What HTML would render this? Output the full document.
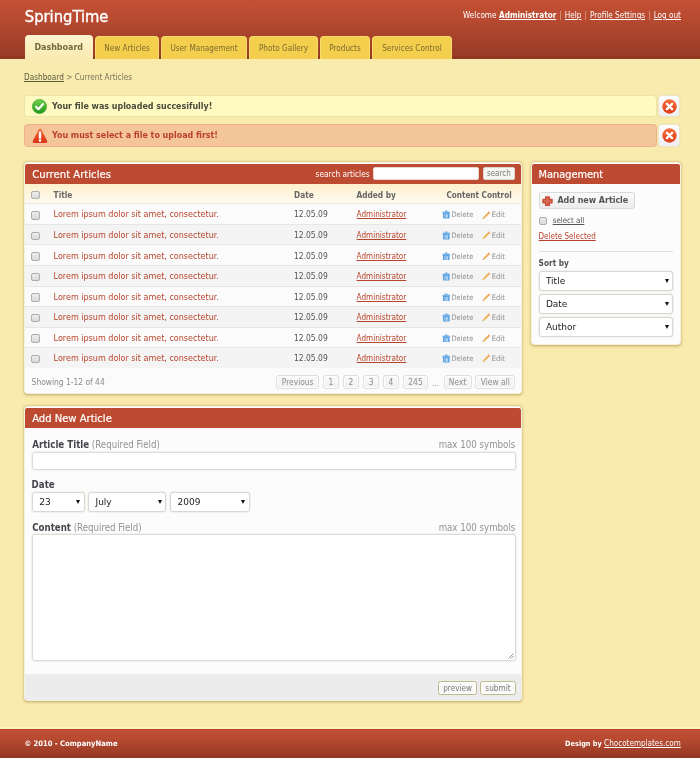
<!DOCTYPE html>
<html lang="en">
<head>
<meta charset="utf-8">
<title>SpringTime</title>
<style>
*{box-sizing:border-box;margin:0;padding:0}
html,body{width:700px;height:758px;overflow:hidden}
body{background:#f9eaae;font-family:"DejaVu Sans Condensed","DejaVu Sans","Liberation Sans",sans-serif;font-size:8.2px;color:#555;position:relative;line-height:1;will-change:transform}
a{color:inherit}
.abs{position:absolute;white-space:nowrap}
#header{position:absolute;left:0;top:0;width:700px;height:59px;background:linear-gradient(#c35034 0,#b94b31 30%,#a9432c 60%,#993b26 94%,#8d351f 97%,#93381f 100%)}
#logo{left:24.8px;top:5.6px;font-size:16.4px;color:#fff;line-height:22px;-webkit-text-stroke:.35px #fff}
#topnav{right:19px;top:9px;font-size:8.15px;color:#fff;font-weight:bold;line-height:12px}
#topnav a{color:#fff}
#topnav .n{font-weight:normal}
#topnav .sep{font-weight:normal;color:#e4ad9b;padding:0 .5px}
.tab{position:absolute;top:35.5px;height:23.5px;background:#f4cf4e;border:1px solid #f8dc6e;border-bottom:none;border-radius:4px 4px 0 0;color:#7b6b2e;font-size:8.15px;line-height:22px;text-align:center;white-space:nowrap}
.tab.act{top:35px;height:24.5px;background:linear-gradient(#fef4cf,#f9eaae);border:none;color:#6f6b3c;font-weight:bold;font-size:8.85px;line-height:24px}
#crumb{left:24px;top:71px;font-size:8.18px;line-height:12px;color:#77775c}
#crumb a{color:#5b5b40}
.msg{position:absolute;left:24px;width:632.6px;height:22.4px;border-radius:3.5px;font-weight:bold;font-size:8.85px;line-height:20.4px;padding-left:27px;white-space:nowrap}
.msg.ok{top:95px;background:#fefac2;border:1px solid #ebe4a4;color:#4a4a3a}
.msg.err{top:124.2px;background:#f5c59a;border:1px solid #ecb285;color:#b9412c}
.close{position:absolute;left:658.3px;width:22.2px;height:22.3px;border-radius:3.5px;background:linear-gradient(#fdfdfd,#efeff3);border:1px solid #ece6c8;box-shadow:0 0 1px rgba(160,140,60,.4)}
.box{position:absolute;background:#fcfcfc;border:1px solid #f6f1dc;border-radius:3.5px;box-shadow:0 .5px 3px rgba(140,110,30,.55);overflow:hidden}
.box h2{position:absolute;left:0;top:1px;right:0;height:20px;background:#bc4b31;color:#fff;font-family:"DejaVu Sans","Liberation Sans",sans-serif;font-weight:normal;font-size:10px;line-height:22px;padding-left:7.2px;-webkit-text-stroke:.2px #fff;border-radius:2px 2px 0 0}
.th{position:absolute;left:0;right:0;top:21px;height:20.4px;background:linear-gradient(#fdf0cb,#fefaf0);border-bottom:1px solid #e8e6e0;font-weight:bold;color:#666}
.th span,.tr span,.tr a{position:absolute;white-space:nowrap}
.th span{top:1.7px;line-height:19px;font-size:8.25px}
.tr{position:absolute;left:0;right:0;height:20.55px;border-bottom:1px solid #e6e6e6;line-height:19.55px}
.tr.o{background:#fbfbfb}.tr.e{background:#f4f4f4}
.tr span,.tr a{top:1.1px}
.tr .t{left:28.6px;color:#b8442b;font-size:8.95px}
.tr .d{left:269px;font-size:8.44px;color:#555}
.tr .u{left:331.6px;font-size:8.12px;color:#b8442b}
.tr .del{left:426.5px;font-size:7.4px;color:#8e8e8e}
.tr .ed{left:466.8px;font-size:7.5px;color:#8e8e8e}
.cb{position:absolute;width:8.6px;height:8.6px;border:1px solid #adadad;border-radius:2px;background:linear-gradient(#ededed,#d9d9d9)}
.pg{position:absolute;top:212px;height:14px;border:1px solid #dedede;border-radius:3px;background:linear-gradient(#f8f8f8,#f1f1f1);color:#8c8c8c;font-size:8.37px;line-height:12px;text-align:center;box-shadow:0 0 0 1px #fff inset}
.btn{position:absolute;border:1px solid #d9d9d9;border-radius:2.5px;background:linear-gradient(#fafafa,#ececec);color:#555}
.sel{position:absolute;background:#fff;border:1px solid #d8d8d8;border-radius:3px;color:#222;font-family:"DejaVu Sans","Liberation Sans",sans-serif;font-size:9px;white-space:nowrap;height:19.5px;line-height:19.4px;padding-left:6.3px;box-shadow:0 0 0 1px #f4f1e8}
.sel i{position:absolute;right:3.2px;top:50%;margin-top:-1.7px;width:0;height:0;border-left:2.4px solid transparent;border-right:2.4px solid transparent;border-top:4.2px solid #111}
.lbl{position:absolute;white-space:nowrap;font-size:9.65px;color:#939393;line-height:12px}
.lbl b{color:#46464c}
.inp{position:absolute;background:#fff;border:1px solid #dcdcdc;border-radius:3px;box-shadow:0 0 0 1px #f4f1e8}
.sb{position:absolute;top:274.2px;height:14px;border:1px solid #bdb78c;border-radius:2.5px;background:#f9f9f7;color:#7a7a7a;line-height:12px;text-align:center;box-shadow:0 0 0 1px #fff inset}
#footer{left:0;top:729px;width:700px;height:29px;background:linear-gradient(#b83c24 0,#c24f33 5%,#b94b31 30%,#a9432c 60%,#993b26 90%,#8e3520 94%,#983a25 100%);color:#fff;font-size:8.2px;box-shadow:0 -2px 0 #fcf4bc}
#footer a{color:#fff}
#footer span{top:8.8px;line-height:12px}
</style>
</head>
<body>
<svg width="0" height="0" style="position:absolute"><defs>
<linearGradient id="cg" x1="0" y1="0" x2="0" y2="1"><stop offset="0" stop-color="#f4703f"/><stop offset="1" stop-color="#df3a18"/></linearGradient>
<linearGradient id="gg" x1="0" y1="0" x2="0" y2="1"><stop offset="0" stop-color="#6fd24c"/><stop offset="1" stop-color="#23951b"/></linearGradient>
<linearGradient id="rg" x1="0" y1="0" x2="0" y2="1"><stop offset="0" stop-color="#f86a3a"/><stop offset="1" stop-color="#d9381a"/></linearGradient>
</defs></svg>
<div id="header"></div>
<div id="logo" class="abs">SpringTime</div>
<div id="topnav" class="abs"><span class="n">Welcome</span> <a href="#">Administrator</a> <span class="sep">|</span> <a href="#" class="n">Help</a> <span class="sep">|</span> <a href="#" class="n">Profile Settings</a> <span class="sep">|</span> <a href="#" class="n">Log out</a></div>

<div class="tab act" style="left:24.5px;width:68.5px">Dashboard</div>
<div class="tab" style="left:95px;width:64px">New Articles</div>
<div class="tab" style="left:161px;width:86px">User Management</div>
<div class="tab" style="left:249px;width:69px">Photo Gallery</div>
<div class="tab" style="left:320px;width:50px">Products</div>
<div class="tab" style="left:372px;width:80px">Services Control</div>

<div id="crumb" class="abs"><a href="#">Dashboard</a> &gt; Current Articles</div>

<div class="msg ok">Your file was uploaded succesifully!</div>
<div class="msg err">You must select a file to upload first!</div>
<svg class="abs" style="left:31.5px;top:99px" width="15" height="15" viewBox="0 0 15 15"><circle cx="7.5" cy="7.5" r="7.100" fill="url(#gg)" stroke="#2f9a25" stroke-width=".6"/><path d="M4 7.700l2.400 2.500 4.600-5.200" fill="none" stroke="#fff" stroke-width="2.1" stroke-linecap="round" stroke-linejoin="round"/></svg>
<svg class="abs" style="left:31.5px;top:127.6px" width="16" height="16" viewBox="0 0 16 16"><path d="M8 2.200L13.800 13.400H2.200z" fill="url(#rg)" stroke="url(#rg)" stroke-width="3" stroke-linejoin="round"/><path d="M8 4.600v5.200" stroke="#fff" stroke-width="2.3" stroke-linecap="round"/><circle cx="8" cy="12.600" r="1.300" fill="#fff"/></svg>
<div class="close" style="top:95px"><svg class="abs" style="left:2.8px;top:3px" width="15" height="15" viewBox="0 0 15 15"><circle cx="7.5" cy="7.5" r="7.2" fill="url(#cg)"/><path d="M4.900 4.900l5.200 5.200M10.100 4.900l-5.200 5.200" stroke="#fff" stroke-width="2.3" stroke-linecap="round"/></svg></div>
<div class="close" style="top:124.3px"><svg class="abs" style="left:2.8px;top:3px" width="15" height="15" viewBox="0 0 15 15"><circle cx="7.5" cy="7.5" r="7.2" fill="url(#cg)"/><path d="M4.900 4.900l5.200 5.200M10.100 4.900l-5.200 5.200" stroke="#fff" stroke-width="2.3" stroke-linecap="round"/></svg></div>

<div class="box" id="b1" style="left:24px;top:162px;width:498.4px;height:231.6px"><h2 style="font-size:10.1px">Current Articles</h2>
<span class="abs" style="left:290.6px;top:1px;line-height:21px;color:#fff;font-size:8.23px">search articles</span>
<div class="abs" style="left:348px;top:4.2px;width:106px;height:13px;background:#fff;border:1px solid #e9d6cf;border-radius:2px"></div>
<div class="abs" style="left:457.6px;top:4.2px;width:32.6px;height:13px;background:#f5f5f3;border:1px solid #e0d4cc;border-radius:2px;color:#7a7a7a;font-size:8px;line-height:12.6px;text-align:center">search</div>
<div class="th"><i class="cb" style="left:6.4px;top:6.5px"></i><span style="left:28.6px">Title</span><span style="left:269px">Date</span><span style="left:331.4px">Added by</span><span style="left:421.4px;font-size:8.1px">Content Control</span></div>
<div class="tr o" style="top:41.40px"><i class="cb" style="left:6.4px;top:6.6px"></i><span class="t">Lorem ipsum dolor sit amet, consectetur.</span><span class="d">12.05.09</span><a class="u" href="#">Administrator</a><svg class="abs" style="left:416.6px;top:6px" width="8.6" height="8.6" viewBox="0 0 9 9"><path d="M1 3.200h7v5q0 .6-.6.6H1.600q-.6 0-.6-.6z" fill="#5a9fe0"/><path d="M.2 3.300q0-1.600 1.700-1.600h5.200q1.700 0 1.700 1.600z" fill="#76b3e8"/><path d="M3 1.900q0-1.700 1.500-1.700 1.500 0 1.500 1.700z" fill="#68a9e4"/><path d="M3.100 4.300v3.800M4.500 4.300v3.800M5.900 4.300v3.800" stroke="#c4e0f6" stroke-width=".9"/></svg><span class="del">Delete</span><svg class="abs" style="left:456.5px;top:6.2px" width="8.6" height="8.6" viewBox="0 0 9 9"><path d="M7 .6l1.400 1.400-5.600 5.600-2.200.9.800-2.300z" fill="#f1b04e"/><path d="M7 .6l1.400 1.400-.8.800-1.400-1.400z" fill="#ee9a80"/><path d="M.6 8.500l.8-2.300 1.400 1.400z" fill="#f0d6a8"/><path d="M.6 8.500l.3-1 .7.700z" fill="#6a5a4a"/></svg><span class="ed">Edit</span></div>
<div class="tr e" style="top:61.95px"><i class="cb" style="left:6.4px;top:6.6px"></i><span class="t">Lorem ipsum dolor sit amet, consectetur.</span><span class="d">12.05.09</span><a class="u" href="#">Administrator</a><svg class="abs" style="left:416.6px;top:6px" width="8.6" height="8.6" viewBox="0 0 9 9"><path d="M1 3.200h7v5q0 .6-.6.6H1.600q-.6 0-.6-.6z" fill="#5a9fe0"/><path d="M.2 3.300q0-1.600 1.700-1.600h5.200q1.700 0 1.700 1.600z" fill="#76b3e8"/><path d="M3 1.900q0-1.700 1.500-1.700 1.500 0 1.500 1.700z" fill="#68a9e4"/><path d="M3.100 4.300v3.800M4.500 4.300v3.800M5.900 4.300v3.800" stroke="#c4e0f6" stroke-width=".9"/></svg><span class="del">Delete</span><svg class="abs" style="left:456.5px;top:6.2px" width="8.6" height="8.6" viewBox="0 0 9 9"><path d="M7 .6l1.400 1.400-5.600 5.600-2.200.9.800-2.300z" fill="#f1b04e"/><path d="M7 .6l1.400 1.400-.8.800-1.400-1.400z" fill="#ee9a80"/><path d="M.6 8.500l.8-2.300 1.400 1.400z" fill="#f0d6a8"/><path d="M.6 8.500l.3-1 .7.700z" fill="#6a5a4a"/></svg><span class="ed">Edit</span></div>
<div class="tr o" style="top:82.50px"><i class="cb" style="left:6.4px;top:6.6px"></i><span class="t">Lorem ipsum dolor sit amet, consectetur.</span><span class="d">12.05.09</span><a class="u" href="#">Administrator</a><svg class="abs" style="left:416.6px;top:6px" width="8.6" height="8.6" viewBox="0 0 9 9"><path d="M1 3.200h7v5q0 .6-.6.6H1.600q-.6 0-.6-.6z" fill="#5a9fe0"/><path d="M.2 3.300q0-1.600 1.700-1.600h5.200q1.700 0 1.700 1.600z" fill="#76b3e8"/><path d="M3 1.900q0-1.700 1.500-1.700 1.500 0 1.500 1.700z" fill="#68a9e4"/><path d="M3.100 4.300v3.800M4.500 4.300v3.800M5.900 4.300v3.800" stroke="#c4e0f6" stroke-width=".9"/></svg><span class="del">Delete</span><svg class="abs" style="left:456.5px;top:6.2px" width="8.6" height="8.6" viewBox="0 0 9 9"><path d="M7 .6l1.400 1.400-5.600 5.600-2.200.9.800-2.300z" fill="#f1b04e"/><path d="M7 .6l1.400 1.400-.8.800-1.400-1.400z" fill="#ee9a80"/><path d="M.6 8.500l.8-2.300 1.400 1.400z" fill="#f0d6a8"/><path d="M.6 8.500l.3-1 .7.700z" fill="#6a5a4a"/></svg><span class="ed">Edit</span></div>
<div class="tr e" style="top:103.05px"><i class="cb" style="left:6.4px;top:6.6px"></i><span class="t">Lorem ipsum dolor sit amet, consectetur.</span><span class="d">12.05.09</span><a class="u" href="#">Administrator</a><svg class="abs" style="left:416.6px;top:6px" width="8.6" height="8.6" viewBox="0 0 9 9"><path d="M1 3.200h7v5q0 .6-.6.6H1.600q-.6 0-.6-.6z" fill="#5a9fe0"/><path d="M.2 3.300q0-1.600 1.700-1.600h5.200q1.700 0 1.700 1.600z" fill="#76b3e8"/><path d="M3 1.900q0-1.700 1.500-1.700 1.500 0 1.500 1.700z" fill="#68a9e4"/><path d="M3.100 4.300v3.800M4.500 4.300v3.800M5.900 4.300v3.800" stroke="#c4e0f6" stroke-width=".9"/></svg><span class="del">Delete</span><svg class="abs" style="left:456.5px;top:6.2px" width="8.6" height="8.6" viewBox="0 0 9 9"><path d="M7 .6l1.400 1.400-5.600 5.600-2.200.9.800-2.300z" fill="#f1b04e"/><path d="M7 .6l1.400 1.400-.8.800-1.400-1.400z" fill="#ee9a80"/><path d="M.6 8.500l.8-2.300 1.400 1.400z" fill="#f0d6a8"/><path d="M.6 8.500l.3-1 .7.700z" fill="#6a5a4a"/></svg><span class="ed">Edit</span></div>
<div class="tr o" style="top:123.60px"><i class="cb" style="left:6.4px;top:6.6px"></i><span class="t">Lorem ipsum dolor sit amet, consectetur.</span><span class="d">12.05.09</span><a class="u" href="#">Administrator</a><svg class="abs" style="left:416.6px;top:6px" width="8.6" height="8.6" viewBox="0 0 9 9"><path d="M1 3.200h7v5q0 .6-.6.6H1.600q-.6 0-.6-.6z" fill="#5a9fe0"/><path d="M.2 3.300q0-1.600 1.700-1.600h5.200q1.700 0 1.700 1.600z" fill="#76b3e8"/><path d="M3 1.900q0-1.700 1.500-1.700 1.500 0 1.500 1.700z" fill="#68a9e4"/><path d="M3.100 4.300v3.800M4.500 4.300v3.800M5.900 4.300v3.800" stroke="#c4e0f6" stroke-width=".9"/></svg><span class="del">Delete</span><svg class="abs" style="left:456.5px;top:6.2px" width="8.6" height="8.6" viewBox="0 0 9 9"><path d="M7 .6l1.400 1.400-5.600 5.600-2.200.9.800-2.300z" fill="#f1b04e"/><path d="M7 .6l1.400 1.400-.8.800-1.400-1.400z" fill="#ee9a80"/><path d="M.6 8.500l.8-2.300 1.400 1.400z" fill="#f0d6a8"/><path d="M.6 8.500l.3-1 .7.700z" fill="#6a5a4a"/></svg><span class="ed">Edit</span></div>
<div class="tr e" style="top:144.15px"><i class="cb" style="left:6.4px;top:6.6px"></i><span class="t">Lorem ipsum dolor sit amet, consectetur.</span><span class="d">12.05.09</span><a class="u" href="#">Administrator</a><svg class="abs" style="left:416.6px;top:6px" width="8.6" height="8.6" viewBox="0 0 9 9"><path d="M1 3.200h7v5q0 .6-.6.6H1.600q-.6 0-.6-.6z" fill="#5a9fe0"/><path d="M.2 3.300q0-1.600 1.700-1.600h5.200q1.700 0 1.700 1.600z" fill="#76b3e8"/><path d="M3 1.900q0-1.700 1.500-1.700 1.500 0 1.500 1.700z" fill="#68a9e4"/><path d="M3.100 4.300v3.800M4.500 4.300v3.800M5.900 4.300v3.800" stroke="#c4e0f6" stroke-width=".9"/></svg><span class="del">Delete</span><svg class="abs" style="left:456.5px;top:6.2px" width="8.6" height="8.6" viewBox="0 0 9 9"><path d="M7 .6l1.400 1.400-5.600 5.600-2.200.9.800-2.300z" fill="#f1b04e"/><path d="M7 .6l1.400 1.400-.8.800-1.400-1.400z" fill="#ee9a80"/><path d="M.6 8.500l.8-2.300 1.400 1.400z" fill="#f0d6a8"/><path d="M.6 8.500l.3-1 .7.700z" fill="#6a5a4a"/></svg><span class="ed">Edit</span></div>
<div class="tr o" style="top:164.70px"><i class="cb" style="left:6.4px;top:6.6px"></i><span class="t">Lorem ipsum dolor sit amet, consectetur.</span><span class="d">12.05.09</span><a class="u" href="#">Administrator</a><svg class="abs" style="left:416.6px;top:6px" width="8.6" height="8.6" viewBox="0 0 9 9"><path d="M1 3.200h7v5q0 .6-.6.6H1.600q-.6 0-.6-.6z" fill="#5a9fe0"/><path d="M.2 3.300q0-1.600 1.700-1.600h5.200q1.700 0 1.700 1.600z" fill="#76b3e8"/><path d="M3 1.900q0-1.700 1.500-1.700 1.500 0 1.500 1.700z" fill="#68a9e4"/><path d="M3.100 4.300v3.800M4.500 4.300v3.800M5.900 4.300v3.800" stroke="#c4e0f6" stroke-width=".9"/></svg><span class="del">Delete</span><svg class="abs" style="left:456.5px;top:6.2px" width="8.6" height="8.6" viewBox="0 0 9 9"><path d="M7 .6l1.400 1.400-5.600 5.600-2.200.9.800-2.300z" fill="#f1b04e"/><path d="M7 .6l1.400 1.400-.8.800-1.400-1.400z" fill="#ee9a80"/><path d="M.6 8.500l.8-2.300 1.400 1.400z" fill="#f0d6a8"/><path d="M.6 8.500l.3-1 .7.700z" fill="#6a5a4a"/></svg><span class="ed">Edit</span></div>
<div class="tr e" style="top:185.25px"><i class="cb" style="left:6.4px;top:6.6px"></i><span class="t">Lorem ipsum dolor sit amet, consectetur.</span><span class="d">12.05.09</span><a class="u" href="#">Administrator</a><svg class="abs" style="left:416.6px;top:6px" width="8.6" height="8.6" viewBox="0 0 9 9"><path d="M1 3.200h7v5q0 .6-.6.6H1.600q-.6 0-.6-.6z" fill="#5a9fe0"/><path d="M.2 3.300q0-1.600 1.700-1.600h5.200q1.700 0 1.700 1.600z" fill="#76b3e8"/><path d="M3 1.900q0-1.700 1.500-1.700 1.500 0 1.500 1.700z" fill="#68a9e4"/><path d="M3.100 4.300v3.800M4.500 4.300v3.800M5.900 4.300v3.800" stroke="#c4e0f6" stroke-width=".9"/></svg><span class="del">Delete</span><svg class="abs" style="left:456.5px;top:6.2px" width="8.6" height="8.6" viewBox="0 0 9 9"><path d="M7 .6l1.400 1.400-5.600 5.600-2.200.9.800-2.300z" fill="#f1b04e"/><path d="M7 .6l1.400 1.400-.8.800-1.400-1.400z" fill="#ee9a80"/><path d="M.6 8.500l.8-2.300 1.400 1.400z" fill="#f0d6a8"/><path d="M.6 8.500l.3-1 .7.700z" fill="#6a5a4a"/></svg><span class="ed">Edit</span></div>

<div class="abs" style="left:0;right:0;top:205.400px;height:26px;background:#fbfbfb"></div>
<span class="abs" style="left:6.6px;top:207px;line-height:24px;color:#8a8a8a;font-size:8.4px">Showing 1-12 of 44</span>
<div class="pg" style="left:251.3px;width:42.7px">Previous</div><div class="pg" style="left:297.7px;width:16.4px">1</div><div class="pg" style="left:317.8px;width:16.4px">2</div><div class="pg" style="left:337.9px;width:16.3px">3</div><div class="pg" style="left:357.9px;width:16px">4</div><div class="pg" style="left:378px;width:25px">245</div><div class="pg" style="left:418.5px;width:28.2px">Next</div><div class="pg" style="left:450.4px;width:39.8px">View all</div>
<span class="abs" style="left:407px;top:212.5px;line-height:14px;color:#8a8a8a;font-size:8.4px">...</span>
</div>

<div class="box" id="b2" style="left:531.4px;top:162px;width:149.4px;height:182.6px"><h2 style="font-size:9.8px;padding-left:6.2px">Management</h2>
<div class="btn" style="left:6.2px;top:29px;width:96.6px;height:17px"></div>
<svg class="abs" style="left:9.6px;top:32.600px" width="11" height="10.400" viewBox="0 0 11 10.400"><path d="M3.700 1h3.600v2.600h2.700v3.200h-2.700v2.600H3.700v-2.600H1V3.600h2.700z" fill="#db6a52" stroke="#c9503a" stroke-width="1.5" stroke-linejoin="round"/></svg>
<span class="abs" style="left:25px;top:29.3px;line-height:17px;font-weight:bold;font-size:8.83px;color:#555">Add new Article</span>
<i class="cb" style="left:6.6px;top:54px;width:8px;height:8px"></i>
<a class="abs" href="#" style="left:20.3px;top:51.8px;line-height:12px;font-size:7.9px;color:#555">select all</a>
<a class="abs" href="#" style="left:6.2px;top:67.6px;line-height:12px;font-size:8px;color:#b8442b">Delete Selected</a>
<div class="abs" style="left:6.2px;top:88px;width:134.600px;height:1px;background:#dedede"></div>
<span class="abs" style="left:6.2px;top:94.3px;line-height:12px;font-weight:bold;font-size:8.23px;color:#555">Sort by</span>
<div class="sel" style="left:6.2px;top:108.2px;width:134.700px">Title<i></i></div>
<div class="sel" style="left:6.2px;top:131.3px;width:134.700px">Date<i></i></div>
<div class="sel" style="left:6.2px;top:154.3px;width:134.700px">Author<i></i></div>
</div>

<div class="box" id="b3" style="left:24px;top:406px;width:498.4px;height:295.4px"><h2>Add New Article</h2>
<span class="lbl" style="left:7.2px;top:32.1px"><b>Article Title</b> (Required Field)</span>
<span class="lbl" style="right:6.1px;top:32.1px">max 100 symbols</span>
<div class="inp" style="left:7px;top:45px;width:483.5px;height:18px"></div>
<span class="lbl" style="left:6.6px;top:72px"><b>Date</b></span>
<div class="sel" style="left:7px;top:85px;width:52.6px">23<i></i></div>
<div class="sel" style="left:63.2px;top:85px;width:77.8px">July<i></i></div>
<div class="sel" style="left:145.300px;top:85px;width:79.300px">2009<i></i></div>
<span class="lbl" style="left:7.2px;top:114.6px"><b>Content</b> (Required Field)</span>
<span class="lbl" style="right:6.1px;top:114.6px">max 100 symbols</span>
<div class="inp" style="left:7px;top:127px;width:483.5px;height:126.500px"></div>
<svg class="abs" style="left:483px;top:246px" width="6" height="6" viewBox="0 0 6 6"><path d="M5.500.5l-5 5M5.500 3l-2.500 2.500" stroke="#777" stroke-width=".8"/></svg>
<div class="abs" style="left:0;right:0;top:267.400px;bottom:0;background:#ececec"></div>
<div class="sb" style="left:413px;width:39.2px;font-size:8.13px">preview</div>
<div class="sb" style="left:455.2px;width:35.6px;font-size:8.19px">submit</div>
</div>

<div id="footer" class="abs"><span class="abs" style="left:24.4px;font-weight:bold;font-size:7.57px">© 2010 - CompanyName</span><span class="abs" style="right:19.2px;font-size:8.05px"><b style="font-size:7.3px">Design by</b> <a href="#">Chocotemplates.com</a></span></div>
</body>
</html>
